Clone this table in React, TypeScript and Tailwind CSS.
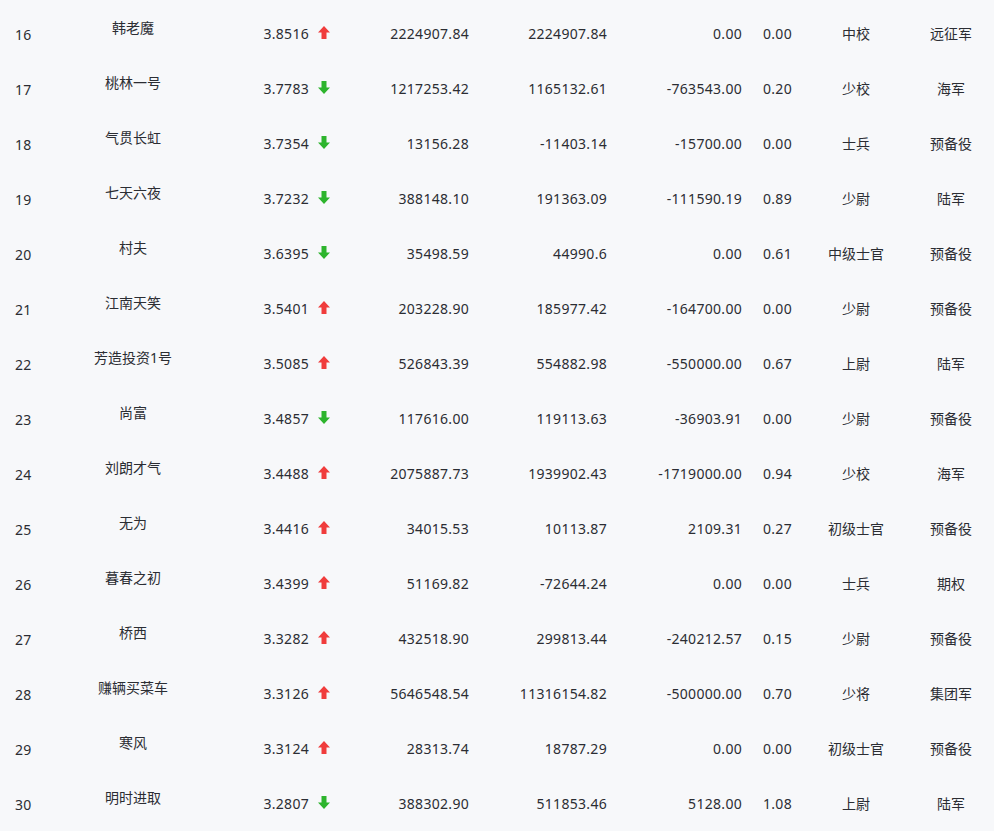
import React from "react";

type Row = {
  rank: number;
  name: string;
  score: string;
  up: boolean;
  total: string;
  profit: string;
  flow: string;
  ratio: string;
  rankTitle: string;
  group: string;
};

const rows: Row[] = [
  { rank: 16, name: "韩老魔", score: "3.8516", up: true, total: "2224907.84", profit: "2224907.84", flow: "0.00", ratio: "0.00", rankTitle: "中校", group: "远征军" },
  { rank: 17, name: "桃林一号", score: "3.7783", up: false, total: "1217253.42", profit: "1165132.61", flow: "-763543.00", ratio: "0.20", rankTitle: "少校", group: "海军" },
  { rank: 18, name: "气贯长虹", score: "3.7354", up: false, total: "13156.28", profit: "-11403.14", flow: "-15700.00", ratio: "0.00", rankTitle: "士兵", group: "预备役" },
  { rank: 19, name: "七天六夜", score: "3.7232", up: false, total: "388148.10", profit: "191363.09", flow: "-111590.19", ratio: "0.89", rankTitle: "少尉", group: "陆军" },
  { rank: 20, name: "村夫", score: "3.6395", up: false, total: "35498.59", profit: "44990.6", flow: "0.00", ratio: "0.61", rankTitle: "中级士官", group: "预备役" },
  { rank: 21, name: "江南天笑", score: "3.5401", up: true, total: "203228.90", profit: "185977.42", flow: "-164700.00", ratio: "0.00", rankTitle: "少尉", group: "预备役" },
  { rank: 22, name: "芳造投资1号", score: "3.5085", up: true, total: "526843.39", profit: "554882.98", flow: "-550000.00", ratio: "0.67", rankTitle: "上尉", group: "陆军" },
  { rank: 23, name: "尚富", score: "3.4857", up: false, total: "117616.00", profit: "119113.63", flow: "-36903.91", ratio: "0.00", rankTitle: "少尉", group: "预备役" },
  { rank: 24, name: "刘朗才气", score: "3.4488", up: true, total: "2075887.73", profit: "1939902.43", flow: "-1719000.00", ratio: "0.94", rankTitle: "少校", group: "海军" },
  { rank: 25, name: "无为", score: "3.4416", up: true, total: "34015.53", profit: "10113.87", flow: "2109.31", ratio: "0.27", rankTitle: "初级士官", group: "预备役" },
  { rank: 26, name: "暮春之初", score: "3.4399", up: true, total: "51169.82", profit: "-72644.24", flow: "0.00", ratio: "0.00", rankTitle: "士兵", group: "期权" },
  { rank: 27, name: "桥西", score: "3.3282", up: true, total: "432518.90", profit: "299813.44", flow: "-240212.57", ratio: "0.15", rankTitle: "少尉", group: "预备役" },
  { rank: 28, name: "赚辆买菜车", score: "3.3126", up: true, total: "5646548.54", profit: "11316154.82", flow: "-500000.00", ratio: "0.70", rankTitle: "少将", group: "集团军" },
  { rank: 29, name: "寒风", score: "3.3124", up: true, total: "28313.74", profit: "18787.29", flow: "0.00", ratio: "0.00", rankTitle: "初级士官", group: "预备役" },
  { rank: 30, name: "明时进取", score: "3.2807", up: false, total: "388302.90", profit: "511853.46", flow: "5128.00", ratio: "1.08", rankTitle: "上尉", group: "陆军" },
];

function Arrow({ up }: { up: boolean }) {
  return (
    <svg
      width="12"
      height="13"
      viewBox="0 0 12 13"
      className={up ? "text-[#f03c3c]" : "text-[#2db42d] rotate-180"}
    >
      <path d="M6 0 L12 6.5 L8.5 6.5 L8.5 13 L3.5 13 L3.5 6.5 L0 6.5 Z" fill="currentColor" />
    </svg>
  );
}

export default function App() {
  return (
    <div
      className="min-h-[831px] w-[994px] bg-[#f7f8fa] pt-[6px] text-[14px] text-[#2b2d33]"
      style={{ fontFamily: '"Noto Sans", "Noto Sans CJK SC", sans-serif' }}
    >
      {rows.map((r) => (
        <div
          key={r.rank}
          className="grid h-[55px] grid-cols-[75px_116px_144px_144px_138px_135px_58px_92px_92px] items-center tracking-[0.3px]"
        >
          <div className="pl-[15px] pt-[1px]">{r.rank}</div>
          <div className="-mt-[12px] text-center tracking-normal">{r.name}</div>
          <div className="flex items-center justify-end pr-[5px]">
            <span>{r.score}</span>
            <span className="ml-[9px] -mt-[2px] flex">
              <Arrow up={r.up} />
            </span>
          </div>
          <div className="pr-[10px] text-right">{r.total}</div>
          <div className="pr-[10px] text-right">{r.profit}</div>
          <div className="pr-[10px] text-right">{r.flow}</div>
          <div className="pl-[11px]">{r.ratio}</div>
          <div className="text-center tracking-normal">{r.rankTitle}</div>
          <div className="pl-[6px] text-center tracking-normal">{r.group}</div>
        </div>
      ))}
    </div>
  );
}
